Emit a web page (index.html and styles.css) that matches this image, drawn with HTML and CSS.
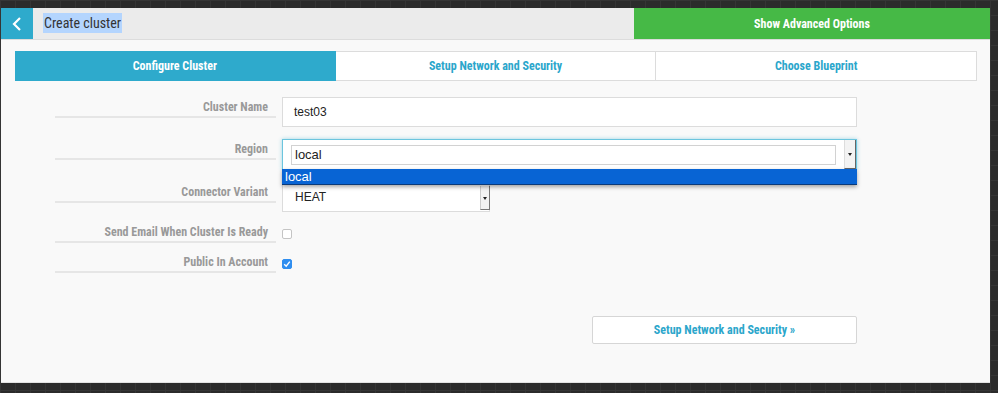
FILE: index.html
```html
<!DOCTYPE html>
<html lang="en">
<head>
    <meta charset="UTF-8">
    <title>Create cluster</title>
    <link rel="stylesheet" href="styles.css">
</head>
<body>

    <div class="panel">
        <div class="header">
            <a class="back" href="#">
                <svg width="10" height="14" viewBox="0 0 10 14"><polyline points="8,1 2,7 8,13" fill="none" stroke="#fff" stroke-width="2.2"/></svg>
            </a>
            <h1 class="title"><span class="selected">Create cluster</span></h1>
            <button class="advanced">Show Advanced Options</button>
        </div>

        <div class="tabs">
            <div class="tab active">Configure Cluster</div>
            <div class="tab">Setup Network and Security</div>
            <div class="tab">Choose Blueprint</div>
        </div>

        <div class="form">
            <div class="row">
                <label class="label">Cluster Name</label>
                <div class="input wide">test03</div>
            </div>

            <div class="row">
                <label class="label">Region</label>
                <div class="combo">
                    <div class="combo-box">
                        <div class="combo-input">local</div>
                        <span class="combo-arrow"><i class="caret"></i></span>
                    </div>
                    <ul class="dropdown">
                        <li>local</li>
                    </ul>
                </div>
            </div>

            <div class="row last-input">
                <label class="label">Connector Variant</label>
                <div class="input short">
                    HEAT
                    <span class="select-arrow"><i class="caret"></i></span>
                </div>
            </div>

            <div class="row check-row">
                <label class="label">Send Email When Cluster Is Ready</label>
                <span class="checkbox"></span>
            </div>

            <div class="row check-row">
                <label class="label">Public In Account</label>
                <span class="checkbox checked">
                    <svg width="8" height="8" viewBox="0 0 8 8"><polyline points="1.2,4.2 3.2,6.2 6.8,1.6" fill="none" stroke="#fff" stroke-width="1.4"/></svg>
                </span>
            </div>

            <div class="actions">
                <button class="next">Setup Network and Security &raquo;</button>
            </div>
        </div>
    </div>

</body>
</html>
```

FILE: styles.css
```css
body {
    margin: 0;
    padding-top: 8px;
    background-color: #2b2b2b;
    background-image:
        linear-gradient(to right, #353535 1px, transparent 1px),
        linear-gradient(to bottom, #353535 1px, transparent 1px);
    background-size: 15px 15px;
    font-family: "Roboto Condensed", "Liberation Sans Narrow", "DejaVu Sans Condensed", Roboto, sans-serif;
    height: 393px;
    overflow: hidden;
}
.panel {
    margin-left: 1px;
    width: 989px;
    height: 374px;
    background: #f9f9f9;
    border-bottom: 1px solid #e2e2e2;
}
.header {
    display: flex;
    height: 31px;
    background: #ebebeb;
    border-bottom: 1px solid #dcdcdc;
}
.back {
    width: 32px;
    background: #2eaacc;
    display: flex;
    align-items: center;
    justify-content: center;
}
.title {
    flex: 1;
    margin: 0;
    padding-left: 10px;
    font-size: 14px;
    font-weight: normal;
    color: #333;
    line-height: 31px;
}
.selected {
    background: #b4d5fe;
    padding: 2px 1px;
}
.advanced {
    width: 356px;
    border: none;
    background: #46b946;
    color: white;
    font-family: inherit;
    font-weight: bold;
    font-size: 12px;
    cursor: pointer;
}
.tabs {
    display: flex;
    margin: 11px 13px 0 14px;
}
.tab {
    flex: 1;
    height: 28px;
    line-height: 28px;
    text-align: center;
    background: white;
    border: 1px solid #dcdcdc;
    border-left: none;
    color: #2ba6cb;
    font-weight: bold;
    font-size: 12px;
}
.tab.active {
    background: #2eaacc;
    border-color: #2eaacc;
    color: white;
}
.form {
    width: 802px;
    margin: 16px 0 0 54px;
}
.row {
    display: flex;
    margin-bottom: 12px;
}
.last-input {
    margin-bottom: 10px;
}
.label {
    width: 213px;
    height: 16px;
    padding: 3px 8px 0 0;
    text-align: right;
    color: #999;
    font-weight: bold;
    font-size: 12px;
    border-bottom: 2px solid #e6e6e6;
    margin-right: 6px;
    flex-shrink: 0;
}
.input {
    position: relative;
    height: 28px;
    line-height: 28px;
    background: white;
    border: 1px solid #dcdcdc;
    padding-left: 11px;
    font-family: "Liberation Sans", Arial, sans-serif;
    font-size: 12px;
    color: #222;
    box-sizing: content-box;
}
.wide {
    width: 562px;
}
.short {
    width: 194px;
    padding-left: 12px;
}
.select-arrow {
    position: absolute;
    right: -1px;
    top: 3px;
    width: 8px;
    height: 23px;
    background: #f2f2f2;
    border-right: 1px solid #777;
    border-bottom: 1px solid #777;
    border-left: 1px solid #ccc;
}
.caret {
    position: absolute;
    left: 50%;
    top: 50%;
    margin: -1px 0 0 -2px;
    border-left: 2.5px solid transparent;
    border-right: 2.5px solid transparent;
    border-top: 3px solid #222;
}
.combo {
    position: relative;
    width: 575px;
}
.combo-box {
    position: relative;
    height: 29px;
    background: white;
    border: 1px solid #6cc5de;
    box-shadow: 0 0 4px rgba(46, 170, 204, 0.45);
}
.combo-input {
    position: absolute;
    left: 8px;
    top: 5px;
    width: 540px;
    height: 18px;
    line-height: 18px;
    border: 1px solid #d2d2d2;
    padding-left: 3px;
    font-family: "Liberation Sans", Arial, sans-serif;
    font-size: 13px;
    color: #222;
}
.combo-arrow {
    position: absolute;
    right: 0;
    top: 0;
    width: 10px;
    height: 28px;
    background: #f3f3f3;
    border-right: 1px solid #666;
    border-bottom: 1px solid #666;
    border-left: 1px solid #ddd;
}
.dropdown {
    position: absolute;
    left: 0;
    top: 30px;
    width: 575px;
    margin: 0;
    padding: 0;
    list-style: none;
    background: #0864d4;
    border-bottom: 1px solid #0a3a7a;
    box-shadow: 0 2px 4px rgba(0, 0, 0, 0.35);
    z-index: 2;
}
.dropdown li {
    height: 15px;
    line-height: 15px;
    padding-left: 3px;
    color: white;
    font-family: "Liberation Sans", Arial, sans-serif;
    font-size: 13px;
}
.check-row {
    margin-bottom: 9px;
}
.checkbox {
    display: flex;
    align-items: center;
    justify-content: center;
    width: 8px;
    height: 8px;
    margin-top: 7px;
    border: 1px solid #c4c4c4;
    border-radius: 2px;
    background: white;
}
.checkbox.checked {
    background: #2f8ef0;
    border-color: #2f8ef0;
}
.actions {
    display: flex;
    justify-content: flex-end;
    margin-top: 43px;
}
.next {
    width: 265px;
    height: 28px;
    background: white;
    border: 1px solid #d6d6d6;
    border-radius: 2px;
    color: #2ba6cb;
    font-family: inherit;
    font-weight: bold;
    font-size: 12px;
    cursor: pointer;
}
```
